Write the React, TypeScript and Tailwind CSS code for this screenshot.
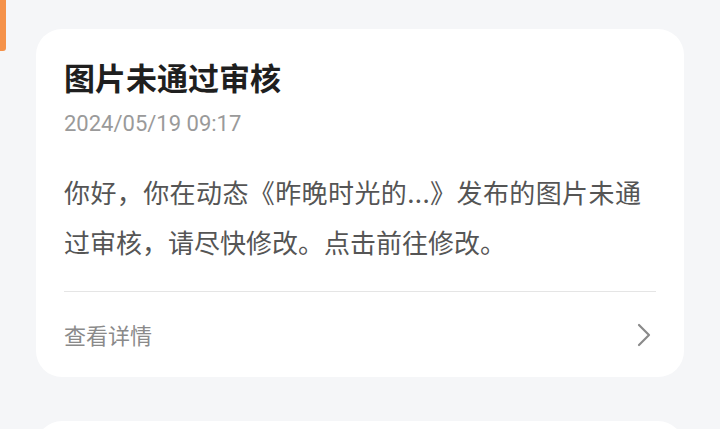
import React from "react";

export default function App() {
  return (
    <div
      className="relative w-[720px] h-[429px] overflow-hidden bg-[#f5f6f8]"
      style={{ fontFamily: '"Noto Sans CJK SC", "Noto Sans", Roboto, sans-serif' }}
    >
      <div className="absolute left-0 top-0 w-[6px] h-[51px] rounded-br-[3px] bg-[#f5924a]" />
      <div className="flex flex-col gap-[44px] pt-[29px] px-[36px]">
        <div className="bg-white rounded-[26px] px-[28px] pt-[28px]">
          <div className="text-[31px] leading-[40px] font-bold text-[#1f1f1f]">图片未通过审核</div>
          <div
            className="mt-[12px] text-[22px] leading-[30px] text-[#9a9a9a]"
            style={{ fontFamily: 'Roboto, "Noto Sans CJK SC", sans-serif' }}
          >
            2024/05/19 09:17
          </div>
          <div className="mt-[28px] text-[26px] leading-[50px] text-[#555555] whitespace-nowrap">
            <span className="tracking-[0.4px]">你好，你在动态《昨晚时光的...》发布的图片未通</span>
            <br />
            过审核，请尽快修改。点击前往修改。
          </div>
          <div className="mt-[24px] h-px bg-[#e5e5e5]" />
          <div className="flex items-center justify-between h-[85px]">
            <span className="text-[22px] text-[#8a8a8a]">查看详情</span>
            <svg width="16" height="26" viewBox="0 0 16 26" className="mr-[4px]">
              <path d="M3 3 L13 13 L3 23" fill="none" stroke="#8a8a8a" strokeWidth="2.2" strokeLinecap="round" strokeLinejoin="round" />
            </svg>
          </div>
        </div>
        <div className="bg-white rounded-[26px] h-[300px]" />
      </div>
    </div>
  );
}
